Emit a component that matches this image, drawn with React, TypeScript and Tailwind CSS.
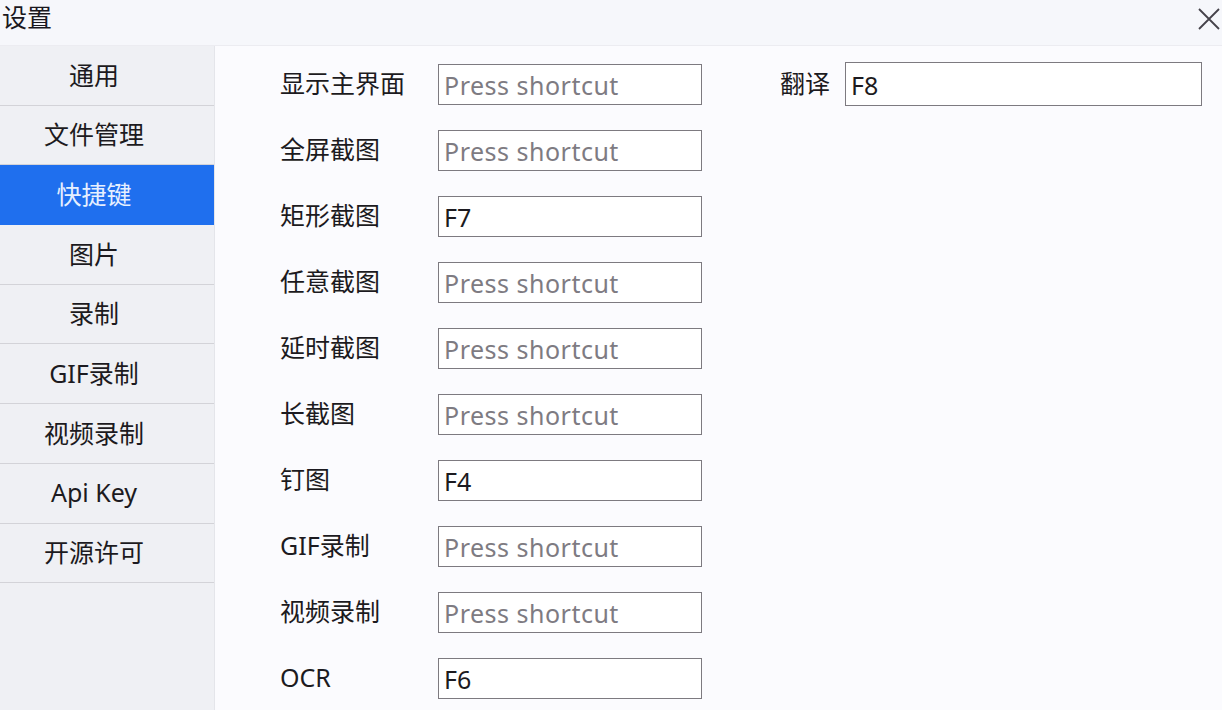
import React from 'react';

const navItems = ['通用', '文件管理', '快捷键', '图片', '录制', 'GIF录制', '视频录制', 'Api Key', '开源许可'];

const shortcuts: { label: string; value: string }[] = [
    { label: '显示主界面', value: '' },
    { label: '全屏截图', value: '' },
    { label: '矩形截图', value: 'F7' },
    { label: '任意截图', value: '' },
    { label: '延时截图', value: '' },
    { label: '长截图', value: '' },
    { label: '钉图', value: 'F4' },
    { label: 'GIF录制', value: '' },
    { label: '视频录制', value: '' },
    { label: 'OCR', value: 'F6' },
];

const font = { fontFamily: '"Noto Sans", "Noto Sans CJK SC", sans-serif' };

const ShortcutBox: React.FC<{ value: string; className?: string }> = ({ value, className = '' }) => (
    <div className={`border border-[#7d7a80] bg-white flex items-center pl-[5px] pt-[2px] text-[25px] leading-none ${className}`}>
        {value ? (
            <span className="text-[#1c1a20]">{value}</span>
        ) : (
            <span className="text-[#7e7b82] tracking-[0.5px]">Press shortcut</span>
        )}
    </div>
);

export default function App() {
    return (
        <div className="w-[1222px] h-[710px] flex flex-col bg-[#fbfbfe] overflow-hidden" style={font}>
            <div className="h-[46px] shrink-0 flex items-center justify-between bg-[#f6f7fb] border-b border-[#ececf1]">
                <span className="pl-[2px] text-[25px] text-[#1a181e] -mt-[10px]">设置</span>
                <svg width="26" height="26" viewBox="0 0 26 26" className="-mt-[8px]">
                    <path d="M3 3 L23 23 M23 3 L3 23" stroke="#45424a" strokeWidth="1.8" fill="none" />
                </svg>
            </div>
            <div className="flex flex-1">
                <div className="w-[215px] bg-[#eff0f4] border-r border-[#e4e5ea] flex flex-col">
                    {navItems.map((item) => {
                        const active = item === '快捷键';
                        return (
                            <div
                                key={item}
                                className={`h-[59.7px] flex items-center justify-center pr-[26px] text-[25px] border-b ${
                                    active ? 'bg-[#1f6fee] text-[#e6efff] border-[#1f6fee]' : 'text-[#1c1a20] border-[#d3d3d8]'
                                }`}
                            >
                                {item}
                            </div>
                        );
                    })}
                </div>
                <div className="flex-1 flex pt-[18px]">
                    <div className="flex flex-col gap-[26px] pl-[65px]">
                        {shortcuts.map((s) => (
                            <div key={s.label} className="flex items-center h-[40px]">
                                <span className="w-[158px] text-[25px] text-[#1c1a20]">{s.label}</span>
                                <ShortcutBox value={s.value} className="w-[264px] h-[41px]" />
                            </div>
                        ))}
                    </div>
                    <div className="flex items-center h-[44px] ml-[78px] -mt-[2px]">
                        <span className="w-[65px] text-[25px] text-[#1c1a20]">翻译</span>
                        <ShortcutBox value="F8" className="w-[357px] h-[44px]" />
                    </div>
                </div>
            </div>
        </div>
    );
}
